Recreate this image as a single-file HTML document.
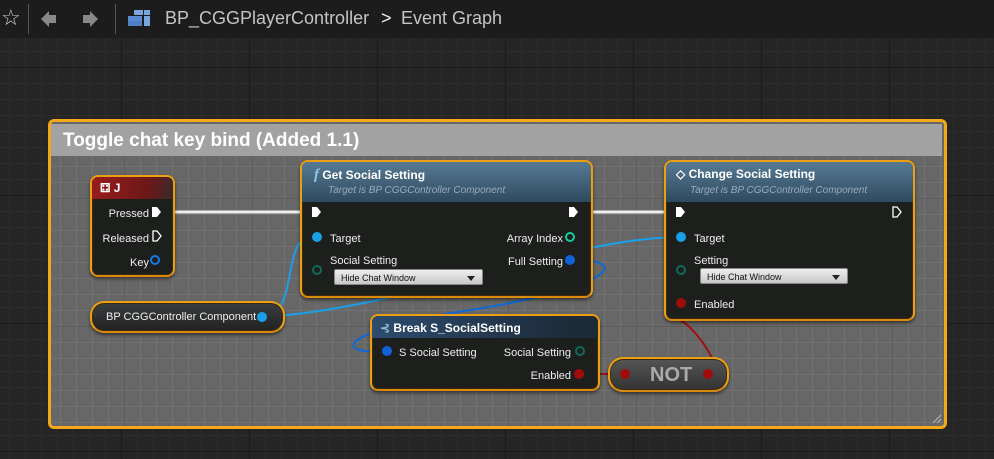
<!DOCTYPE html><html><head><style>
body{margin:0;width:994px;height:459px;overflow:hidden;background:#252525;font-family:"Liberation Sans",sans-serif;position:relative}
.grid{position:absolute;left:0;top:0;width:994px;height:459px;background-color:#252525;background-image:linear-gradient(#1a1a1a 1px,transparent 1px),linear-gradient(90deg,#1a1a1a 1px,transparent 1px),linear-gradient(#2d2d2d 1px,transparent 1px),linear-gradient(90deg,#2d2d2d 1px,transparent 1px);background-size:128px 128px,128px 128px,16px 16px,16px 16px;background-position:-7px 67px}
.top{position:absolute;left:0;top:0;width:994px;height:38px;background:#1c1c1c}
.top span{position:absolute;color:#c4c4c4;font-size:18px;top:8px}
.sep{position:absolute;top:4px;width:1px;height:30px;background:#555}
.comment{position:absolute;left:48px;top:119px;width:893px;height:304px;border:3px solid #f3a81a;border-radius:6px;background-color:#676767;background-image:linear-gradient(#5d5d5d 1px,transparent 1px),linear-gradient(90deg,#5d5d5d 1px,transparent 1px),linear-gradient(#727272 1px,transparent 1px),linear-gradient(90deg,#727272 1px,transparent 1px);background-size:128px 128px,128px 128px,16px 16px,16px 16px;background-position:-55px -52px}
.ctitle{position:absolute;left:0;top:2px;width:891px;height:32px;background:#a2a2a2;color:#fff;font-weight:bold;font-size:19px;line-height:34px;padding-left:12px;box-sizing:border-box}
.node{position:absolute;border:2px solid #eba012;border-bottom-color:#d98a0a;border-radius:8px;background:#1d1f1d;box-shadow:0 2px 3px rgba(0,0,0,.5),inset 0 0 0 1px #3a2a10;color:#eee;font-size:11px}
.hd{position:absolute;left:0;top:0;right:0;border-radius:6px 6px 0 0;color:#fff;font-weight:bold;font-size:12px}
.t{position:absolute;color:#eee;font-size:11px;white-space:nowrap}
.dd{position:absolute;height:16px;background:linear-gradient(#eee,#c8c8c8);border:1px solid #888;border-radius:2px;color:#111;font-size:9px;line-height:16px;padding-left:6px;box-sizing:border-box}
.dd:after{content:"";position:absolute;right:7px;top:6px;border:4px solid transparent;border-top:5px solid #222}
</style></head><body>
<div class="grid"></div>
<div class="top">
<span style="left:1px;top:5px;font-size:22px;color:#ccc">☆</span>
<div class="sep" style="left:28px"></div>
<svg style="position:absolute;left:38px;top:8px" width="80" height="22"><path d="M3 11 L11 3 L11 7 L18 7 L18 15 L11 15 L11 19Z" fill="#888"/><path d="M60 11 L52 3 L52 7 L45 7 L45 15 L52 15 L52 19Z" fill="#888"/></svg>
<div class="sep" style="left:115px"></div>
<svg style="position:absolute;left:127px;top:9px" width="24" height="18"><rect x="7" y="1" width="9" height="5" fill="#7aa6de"/><rect x="17" y="1" width="6" height="5" fill="#7aa6de"/><rect x="1" y="7" width="14" height="5" fill="#5a8ad0"/><rect x="17" y="7" width="6" height="10" fill="#7aa6de"/><rect x="1" y="12" width="14" height="5" fill="#4f7ec4"/></svg>
<span style="left:165px">BP_CGGPlayerController</span>
<span style="left:381px;color:#eee">&gt;</span>
<span style="left:401px">Event Graph</span>
</div>
<div class="comment"><div class="ctitle">Toggle chat key bind (Added 1.1)</div>
<svg style="position:absolute;right:2px;bottom:2px" width="10" height="10"><path d="M9 1L1 9M9 5L5 9" stroke="#bbb"/></svg></div>
<svg style="position:absolute;left:0;top:0" width="994" height="459">
<g fill="none" stroke-width="2">
<path d="M174 212 L300 212" stroke="#eee" stroke-width="3"/>
<path d="M592 212 L664 212" stroke="#eee" stroke-width="3"/>
<path d="M262 317 C300 317,280 237,312 237" stroke="#1aa0e8"/>
<path d="M262 317 C400 310,560 240,676 237" stroke="#1aa0e8"/>
<path d="M572 260 C640 260,600 290,470 310 C340 330,330 355,385 351" stroke="#1068d8"/>
<path d="M578 374 L614 374" stroke="#a01010"/>
<path d="M708 374 C730 374,690 320,678 320" stroke="#a01010"/>
</g></svg>
<div class="node" style="left:90px;top:175px;width:81px;height:98px">
<div class="hd" style="height:22px;background:linear-gradient(100deg,#9a1c1c,#6a1818 70%,#3a2a2a)"><span style="position:absolute;left:8px;top:4px">⚃ J</span></div>
<span class="t" style="right:24px;top:31px">Pressed</span>
<span class="t" style="right:24px;top:56px">Released</span>
<span class="t" style="right:24px;top:80px">Key</span>
</div>
<div class="node" style="left:300px;top:160px;width:289px;height:134px">
<div class="hd" style="height:40px;background:linear-gradient(#577a94,#2e4a5e)"><span style="position:absolute;left:12px;top:5px"><i style="color:#8cc8f0;font-family:'Liberation Serif';font-size:15px">f</i> Get Social Setting</span><span style="position:absolute;left:26px;top:23px;font-weight:normal;font-style:italic;color:#9ab;font-size:10px">Target is BP CGGController Component</span></div>
<span class="t" style="left:28px;top:71px">Target</span>
<span class="t" style="left:28px;top:93px">Social Setting</span>
<div class="dd" style="left:32px;top:107px;width:149px">Hide Chat Window</div>
<span class="t" style="right:28px;top:71px">Array Index</span>
<span class="t" style="right:28px;top:94px">Full Setting</span>
</div>
<div class="node" style="left:664px;top:160px;width:247px;height:157px">
<div class="hd" style="height:40px;background:linear-gradient(#577a94,#2e4a5e)"><span style="position:absolute;left:10px;top:5px">◇ Change Social Setting</span><span style="position:absolute;left:24px;top:23px;font-weight:normal;font-style:italic;color:#9ab;font-size:10px">Target is BP CGGController Component</span></div>
<span class="t" style="left:28px;top:71px">Target</span>
<span class="t" style="left:28px;top:93px">Setting</span>
<div class="dd" style="left:34px;top:106px;width:148px">Hide Chat Window</div>
<span class="t" style="left:28px;top:137px">Enabled</span>
</div>
<div class="node" style="left:90px;top:301px;width:191px;height:28px;border-radius:14px;background:linear-gradient(#3a3d40,#222)">
<span class="t" style="left:14px;top:8px">BP CGGController Component</span></div>
<div class="node" style="left:370px;top:314px;width:226px;height:73px">
<div class="hd" style="height:22px;background:linear-gradient(90deg,#2d4c6e,#1d2a38 90%)"><span style="position:absolute;left:8px;top:5px"><span style="color:#8bc">⊰</span> Break S_SocialSetting</span></div>
<span class="t" style="left:27px;top:31px">S Social Setting</span>
<span class="t" style="right:27px;top:31px">Social Setting</span>
<span class="t" style="right:27px;top:54px">Enabled</span>
</div>
<div class="node" style="left:608px;top:357px;width:117px;height:31px;border-radius:15px;background:linear-gradient(#555,#333)">
<span style="position:absolute;left:40px;top:5px;color:#aaa;font-weight:bold;font-size:20px">NOT</span></div>
<svg style="position:absolute;left:0;top:0" width="994" height="459">
<g fill="#fff"><path d="M152 207h5l4 5-4 5h-5z"/><path d="M312 207h5l4 5-4 5h-5z"/><path d="M569 207h5l4 5-4 5h-5z"/><path d="M676 207h5l4 5-4 5h-5z"/></g>
<g fill="none" stroke="#fff" stroke-width="1.3"><path d="M153 231h4l4 5-4 5h-4z"/><path d="M893 207h4l4 5-4 5h-4z"/></g>
<circle cx="155" cy="260" r="4" fill="none" stroke="#1878e8" stroke-width="2"/>
<circle cx="262" cy="317" r="5" fill="#1aa0e8"/>
<circle cx="317" cy="237" r="5" fill="#1aa0e8"/><circle cx="681" cy="237" r="5" fill="#1aa0e8"/>
<circle cx="317" cy="270" r="4" fill="none" stroke="#0e6b5a" stroke-width="2"/>
<circle cx="681" cy="270" r="4" fill="none" stroke="#0e6b5a" stroke-width="2"/>
<circle cx="570" cy="237" r="4" fill="none" stroke="#1ac8a0" stroke-width="2"/>
<circle cx="570" cy="260" r="5" fill="#1060d8"/>
<circle cx="387" cy="351" r="5" fill="#1060d8"/>
<circle cx="580" cy="351" r="4" fill="none" stroke="#0e6b5a" stroke-width="2"/>
<circle cx="579" cy="374" r="5" fill="#a00c0c"/>
<circle cx="625" cy="374" r="5" fill="#a00c0c"/><circle cx="708" cy="374" r="5" fill="#a00c0c"/>
<circle cx="681" cy="303" r="5" fill="#a00c0c"/>
</svg>
</body></html>
